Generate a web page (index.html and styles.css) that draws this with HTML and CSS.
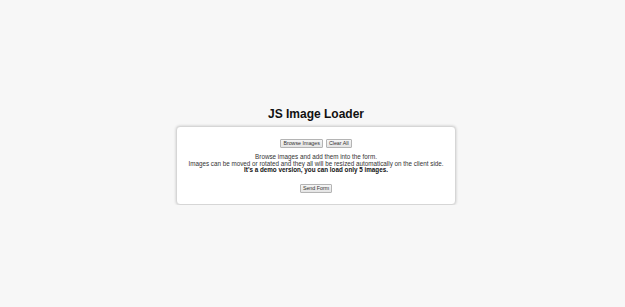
FILE: index.html
```html
<!DOCTYPE html>
<html>
<head>
<meta charset="utf-8">
<title>JS Image Loader</title>
<link rel="stylesheet" href="styles.css">
</head>
<body>
<div class="page">
  <h1 class="title">JS Image Loader</h1>
  <form class="card">
    <div class="actions">
      <button type="button" class="btn">Browse Images</button>
      <button type="button" class="btn">Clear All</button>
    </div>
    <div class="info">
      <div>Browse images and add them into the form.</div>
      <div>Images can be moved or rotated and they all will be resized automatically on the client side.</div>
      <div class="strong">It's a demo version, you can load only 5 images.</div>
    </div>
    <div class="actions">
      <button type="button" class="btn">Send Form</button>
    </div>
  </form>
</div>
</body>
</html>
```
FILE: styles.css
```css
html, body {
  margin: 0;
  padding: 0;
}
body {
  background: #f7f7f7;
  font-family: "Liberation Sans", Arial, sans-serif;
  color: #222;
}
.page {
  width: 280px;
  margin: 0 auto;
  padding: 107px 0 0 7px;
}
.title {
  margin: 0 0 5px;
  font-size: 12px;
  line-height: 14px;
  font-weight: bold;
  text-align: center;
  color: #111;
}
.card {
  background: #fff;
  border: 1px solid #d6d6d6;
  border-radius: 4px;
  box-shadow: 0 0 3px rgba(0, 0, 0, 0.2);
  padding: 12px 0 11px;
  text-align: center;
}
.actions {
  display: flex;
  justify-content: center;
  gap: 3px;
}
.btn {
  font-family: "Liberation Sans", Arial, sans-serif;
  font-size: 5.3px;
  line-height: 7px;
  padding: 0 2px;
  margin: 0;
  border: 1px solid #b4b4b4;
  border-radius: 1px;
  background: linear-gradient(#f6f6f6, #e4e4e4);
  color: #333;
}
.info {
  margin: 6px 0 10px;
  font-size: 6.3px;
  line-height: 6.6px;
  color: #333;
}
.strong {
  font-weight: bold;
  color: #111;
}
```
